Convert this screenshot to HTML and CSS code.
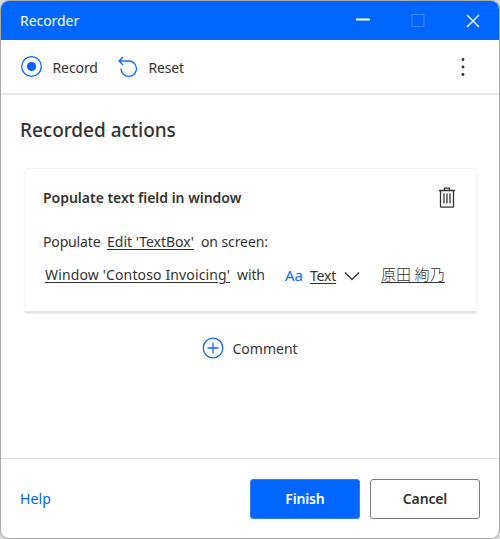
FILE: index.html
```
<!DOCTYPE html>
<html lang="en">
<head>
<meta charset="utf-8">
<title>Recorder</title>
<link rel="stylesheet" href="styles.css">
</head>
<body>
<div class="window">
  <header class="titlebar">
    <span class="title">Recorder</span>
    <div class="controls">
      <svg width="14" height="14" viewBox="0 0 14 14"><path d="M0 5.5h14" stroke="#fff" stroke-width="1.8"/></svg>
      <svg class="disabled" width="14" height="14" viewBox="0 0 14 14"><path d="M.8.5h12.2v12H.8z" fill="none" stroke="#3c85f5" stroke-width="1"/></svg>
      <svg width="14" height="14" viewBox="0 0 14 14"><path d="M1 1l12 12M13 1L1 13" stroke="#fff" stroke-width="1.4"/></svg>
    </div>
  </header>
  <nav class="toolbar">
    <svg class="record-icon" width="22" height="22" viewBox="0 0 22 22"><circle cx="10.5" cy="10.5" r="9.8" fill="none" stroke="#0b69ff" stroke-width="1.3"/><circle cx="10.5" cy="10.5" r="4.6" fill="#0066ff"/></svg>
    <span class="label record">Record</span>
    <svg class="reset-icon" width="20" height="22" viewBox="0 0 20 22"><path d="M5 1L1 5l4 4M1 5h9.8a7.7 7.7 0 1 1-7.7 7.4" fill="none" stroke="#0b69ff" stroke-width="1.3"/></svg>
    <span class="label reset">Reset</span>
    <svg class="more" width="4" height="20" viewBox="0 0 4 20" fill="#333"><circle cx="2" cy="2.5" r="1.4"/><circle cx="2" cy="10" r="1.4"/><circle cx="2" cy="17.5" r="1.4"/></svg>
  </nav>
  <main>
    <h1><span>Recorded actions</span></h1>
    <section class="card">
      <div class="card-head">
        <h2>Populate text field in window</h2>
        <svg width="18" height="22" viewBox="0 0 18 22" fill="none" stroke="#333"><path d="M1 3.5h16M6.5 3.5V1.2h5v2.3M2.5 3.5v16q0 .7.7.7h11.6q.7 0 .7-.7v-16" stroke-width="1.3"/><path d="M6 6.5v10M9 6.5v10M12 6.5v10" stroke-width="1.3"/></svg>
      </div>
      <div class="line first"><span class="populate">Populate</span><a class="edit">Edit 'TextBox'</a><span class="screen">on screen:</span></div>
      <div class="line second"><a class="target">Window 'Contoso Invoicing'</a><span class="with">with</span><span class="type">Aa</span><a class="kind">Text</a><svg class="chevron" width="16" height="10" viewBox="0 0 16 10"><path d="M1 1.5l7 7 7-7" fill="none" stroke="#333" stroke-width="1.3"/></svg><a class="value" lang="ja">原田 絢乃</a></div>
    </section>
    <div class="comment-row">
      <svg width="22" height="22" viewBox="0 0 22 22" fill="none" stroke="#0b69ff" stroke-width="1.3"><circle cx="11" cy="11" r="9.8"/><path d="M5.5 11h11M11 5.5v11"/></svg>
      <span class="comment">Comment</span>
    </div>
  </main>
  <footer>
    <a class="help">Help</a>
    <button class="primary">Finish</button>
    <button>Cancel</button>
  </footer>
</div>
</body>
</html>
```
FILE: styles.css
```
* { box-sizing: border-box; }
body { margin: 0; background: #d8d8d8; color: #333; font: 14px/20px "Noto Sans", "Noto Sans CJK JP", sans-serif; }
svg { display: block; flex: none; }
span, a, h1, h2 { white-space: nowrap; }
.window { width: 500px; height: 539px; display: flex; flex-direction: column; background: #fff; border: 1px solid #a9a9a9; border-radius: 9px; overflow: hidden; }
.titlebar { height: 39px; flex: none; background: #0066ff; display: flex; align-items: center; justify-content: space-between; padding: 0 19px; color: #fff; }
.title { letter-spacing: -.05px; }
.controls { display: flex; gap: 41px; }
.toolbar { height: 55px; flex: none; display: flex; align-items: center; border-bottom: 2px solid #e8e8e8; padding: 0 34px 0 20px; }
.label { padding-top: 2px; }
.record { margin-left: 9.5px; width: 65.5px; letter-spacing: -.1px; }
.reset { margin-left: 10.5px; letter-spacing: -.15px; }
.more { margin-left: auto; }
main { flex: 1; padding: 20px 23px 0; }
h1 { margin: 0 0 0 -4px; font-size: 19px; line-height: 30px; font-weight: 500; letter-spacing: -.03px; }
.card { width: 453px; height: 145px; margin-top: 23px; padding: 18px 20px 0 18px; border: 1px solid #f5f5f5; border-bottom: 2px solid #e3e3e3; border-radius: 3px; box-shadow: 0 1px 2px #00000012; }
.card-head { display: flex; justify-content: space-between; }
h2 { margin: 0; font-size: 14px; line-height: 21px; font-weight: 600; letter-spacing: -.02px; }
.line { display: flex; height: 20px; }
.first { margin-top: 23px; }
.second { margin: 13px 0 0 2px; }
.line a { text-decoration: underline; text-underline-offset: 2px; text-decoration-thickness: 1px; }
.populate { width: 64px; letter-spacing: -.15px; }
.edit { width: 94px; letter-spacing: 0; }
.screen { letter-spacing: -.1px; }
.target { width: 192px; letter-spacing: .14px; }
.with { width: 48px; letter-spacing: -.1px; }
.type { width: 25px; color: #0b69ff; font-size: 15px; }
.kind { width: 34px; padding-top: 1px; letter-spacing: -.2px; }
.chevron { margin: 6px 21px 0 0; }
.value { font-family: "Noto Sans CJK JP", sans-serif; font-weight: 300; font-size: 15px; margin-top: -1px; letter-spacing: .1px; }
.comment-row { display: flex; align-items: center; gap: 8.5px; margin: 24px 0 0 178px; }
.comment { letter-spacing: 0; padding-top: 2px; }
footer { height: 80px; flex: none; border-top: 1px solid #e3e3e3; display: flex; align-items: center; gap: 10px; padding: 0 19px; }
.help { color: #0062ec; margin-right: auto; letter-spacing: .1px; padding-top: 1px; }
button { width: 110px; height: 40px; padding: 1px 0 0; border: 1px solid #7d7d7d; border-radius: 3px; background: #fff; color: #333; font: 600 14px/20px "Noto Sans", sans-serif; letter-spacing: -.15px; }
.primary { border-color: #2d7dff; background: #0066ff; color: #fff; }
```
